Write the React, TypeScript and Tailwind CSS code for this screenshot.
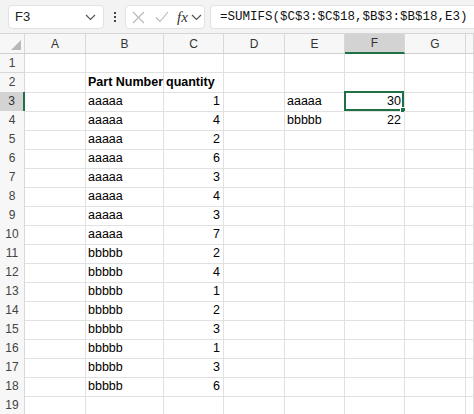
import React from "react";

const cols = ["A", "B", "C", "D", "E", "F", "G", ""];
const widths = "grid-cols-[25px_61px_78px_60px_61px_60px_60px_61px_1fr]";

type Row = { b?: string; c?: string; e?: string; f?: string; bold?: boolean };

const rows: Row[] = [
  {},
  { b: "Part Number", c: "quantity", bold: true },
  { b: "aaaaa", c: "1", e: "aaaaa", f: "30" },
  { b: "aaaaa", c: "4", e: "bbbbb", f: "22" },
  { b: "aaaaa", c: "2" },
  { b: "aaaaa", c: "6" },
  { b: "aaaaa", c: "3" },
  { b: "aaaaa", c: "4" },
  { b: "aaaaa", c: "3" },
  { b: "aaaaa", c: "7" },
  { b: "bbbbb", c: "2" },
  { b: "bbbbb", c: "4" },
  { b: "bbbbb", c: "1" },
  { b: "bbbbb", c: "2" },
  { b: "bbbbb", c: "3" },
  { b: "bbbbb", c: "1" },
  { b: "bbbbb", c: "3" },
  { b: "bbbbb", c: "6" },
  {},
];

function Chevron() {
  return (
    <svg width="11" height="7" viewBox="0 0 11 7" fill="none">
      <path d="M1 1l4.5 4.5L10 1" stroke="#555" strokeWidth="1.2" />
    </svg>
  );
}

function FormulaBar() {
  return (
    <div className="flex h-[34px] items-start border-b border-[#d6d6d6] bg-[#f3f3f3] pt-[5px]">
      <div className="ml-[8px] flex h-[24px] w-[96px] items-center justify-between rounded-[4px] border border-[#e2e2e2] bg-white pl-[6px] pr-[7px]">
        <span className="text-[13px] text-[#222]">F3</span>
        <Chevron />
      </div>
      <div className="flex w-[21px] flex-col items-center justify-center gap-[2px] pt-[7px]">
        <span className="h-[2px] w-[2px] bg-[#444]" />
        <span className="h-[2px] w-[2px] bg-[#444]" />
        <span className="h-[2px] w-[2px] bg-[#444]" />
      </div>
      <div className="flex h-[24px] w-[80px] items-center rounded-[4px] border border-[#e2e2e2] bg-white pl-[6px]">
        <svg width="13" height="13" viewBox="0 0 13 13" fill="none">
          <path d="M1 1l11 11M12 1L1 12" stroke="#b8b8b8" strokeWidth="1.1" />
        </svg>
        <svg className="ml-[10px]" width="14" height="12" viewBox="0 0 14 12" fill="none">
          <path d="M1 6.5l4 4L13 1" stroke="#b8b8b8" strokeWidth="1.1" />
        </svg>
        <span className="ml-[8px] font-['Liberation_Serif'] text-[15px] italic leading-none text-[#333]">
          fx
        </span>
        <span className="ml-[3px] mt-[1px]">
          <Chevron />
        </span>
      </div>
      <div className="ml-[5px] flex h-[24px] flex-1 items-center rounded-l-[4px] border border-r-0 border-[#e2e2e2] bg-white pl-[9px]">
        <span className="whitespace-nowrap font-['Liberation_Mono'] text-[12.5px] text-[#111]">
          =SUMIFS($C$3:$C$18,$B$3:$B$18,E3)
        </span>
      </div>
    </div>
  );
}

function HeaderRow() {
  return (
    <div className={`grid h-[20px] ${widths} border-b border-[#d0d0d0] bg-[#f7f7f7]`}>
      <div className="relative border-r border-[#d8d8d8]">
        <svg className="absolute bottom-[3px] right-[3px]" width="10" height="10" viewBox="0 0 10 10">
          <path d="M10 0V10H0Z" fill="#b8b8b8" />
        </svg>
      </div>
      {cols.map((c, i) =>
        c === "F" ? (
          <div
            key={i}
            className="-mb-[1px] flex items-center justify-center border-b-2 border-r border-b-[#1e7145] border-r-[#d8d8d8] bg-[#d3d3d3] text-[12px] text-[#333]"
          >
            {c}
          </div>
        ) : (
          <div key={i} className="flex items-center justify-center border-r border-[#d8d8d8] text-[12px] text-[#333]">
            {c}
          </div>
        )
      )}
    </div>
  );
}

function Cell({ text, right, bold, selected }: { text?: string; right?: boolean; bold?: boolean; selected?: boolean }) {
  return (
    <div
      className={`relative flex items-center overflow-visible whitespace-nowrap border-b border-r border-[#e1e1e1] text-[12.5px] text-black ${
        right ? "justify-end pr-[3px]" : "pl-[2px]"
      } ${bold ? "font-bold" : ""}`}
    >
      {text}
      {selected && (
        <div className="pointer-events-none absolute -left-[1px] -top-[1px] -bottom-[0px] -right-[0px] border-2 border-[#1e7145]">
          <span className="absolute -bottom-[4px] -right-[4px] h-[6px] w-[6px] border border-white bg-[#1e7145]" />
        </div>
      )}
    </div>
  );
}

export default function App() {
  return (
    <div className="h-[414px] w-[474px] overflow-hidden bg-white font-['Liberation_Sans',sans-serif]">
      <FormulaBar />
      <HeaderRow />
      {rows.map((r, i) => {
        const n = i + 1;
        const sel = n === 3;
        return (
          <div key={n} className={`grid h-[19px] ${widths}`}>
            <div
              className={`flex items-center justify-center border-b text-[12px] ${
                sel
                  ? "border-r-2 border-b-[#d8d8d8] border-r-[#1e7145] bg-[#d3d3d3] text-[#333]"
                  : "border-r border-[#d8d8d8] bg-[#f7f7f7] text-[#444]"
              }`}
            >
              {n}
            </div>
            <Cell />
            <Cell text={r.b} bold={r.bold} />
            {r.bold ? <Cell text={r.c} bold /> : <Cell text={r.c} right />}
            <Cell />
            <Cell text={r.e} />
            <Cell text={r.f} right selected={sel} />
            <Cell />
            <Cell />
          </div>
        );
      })}
    </div>
  );
}
